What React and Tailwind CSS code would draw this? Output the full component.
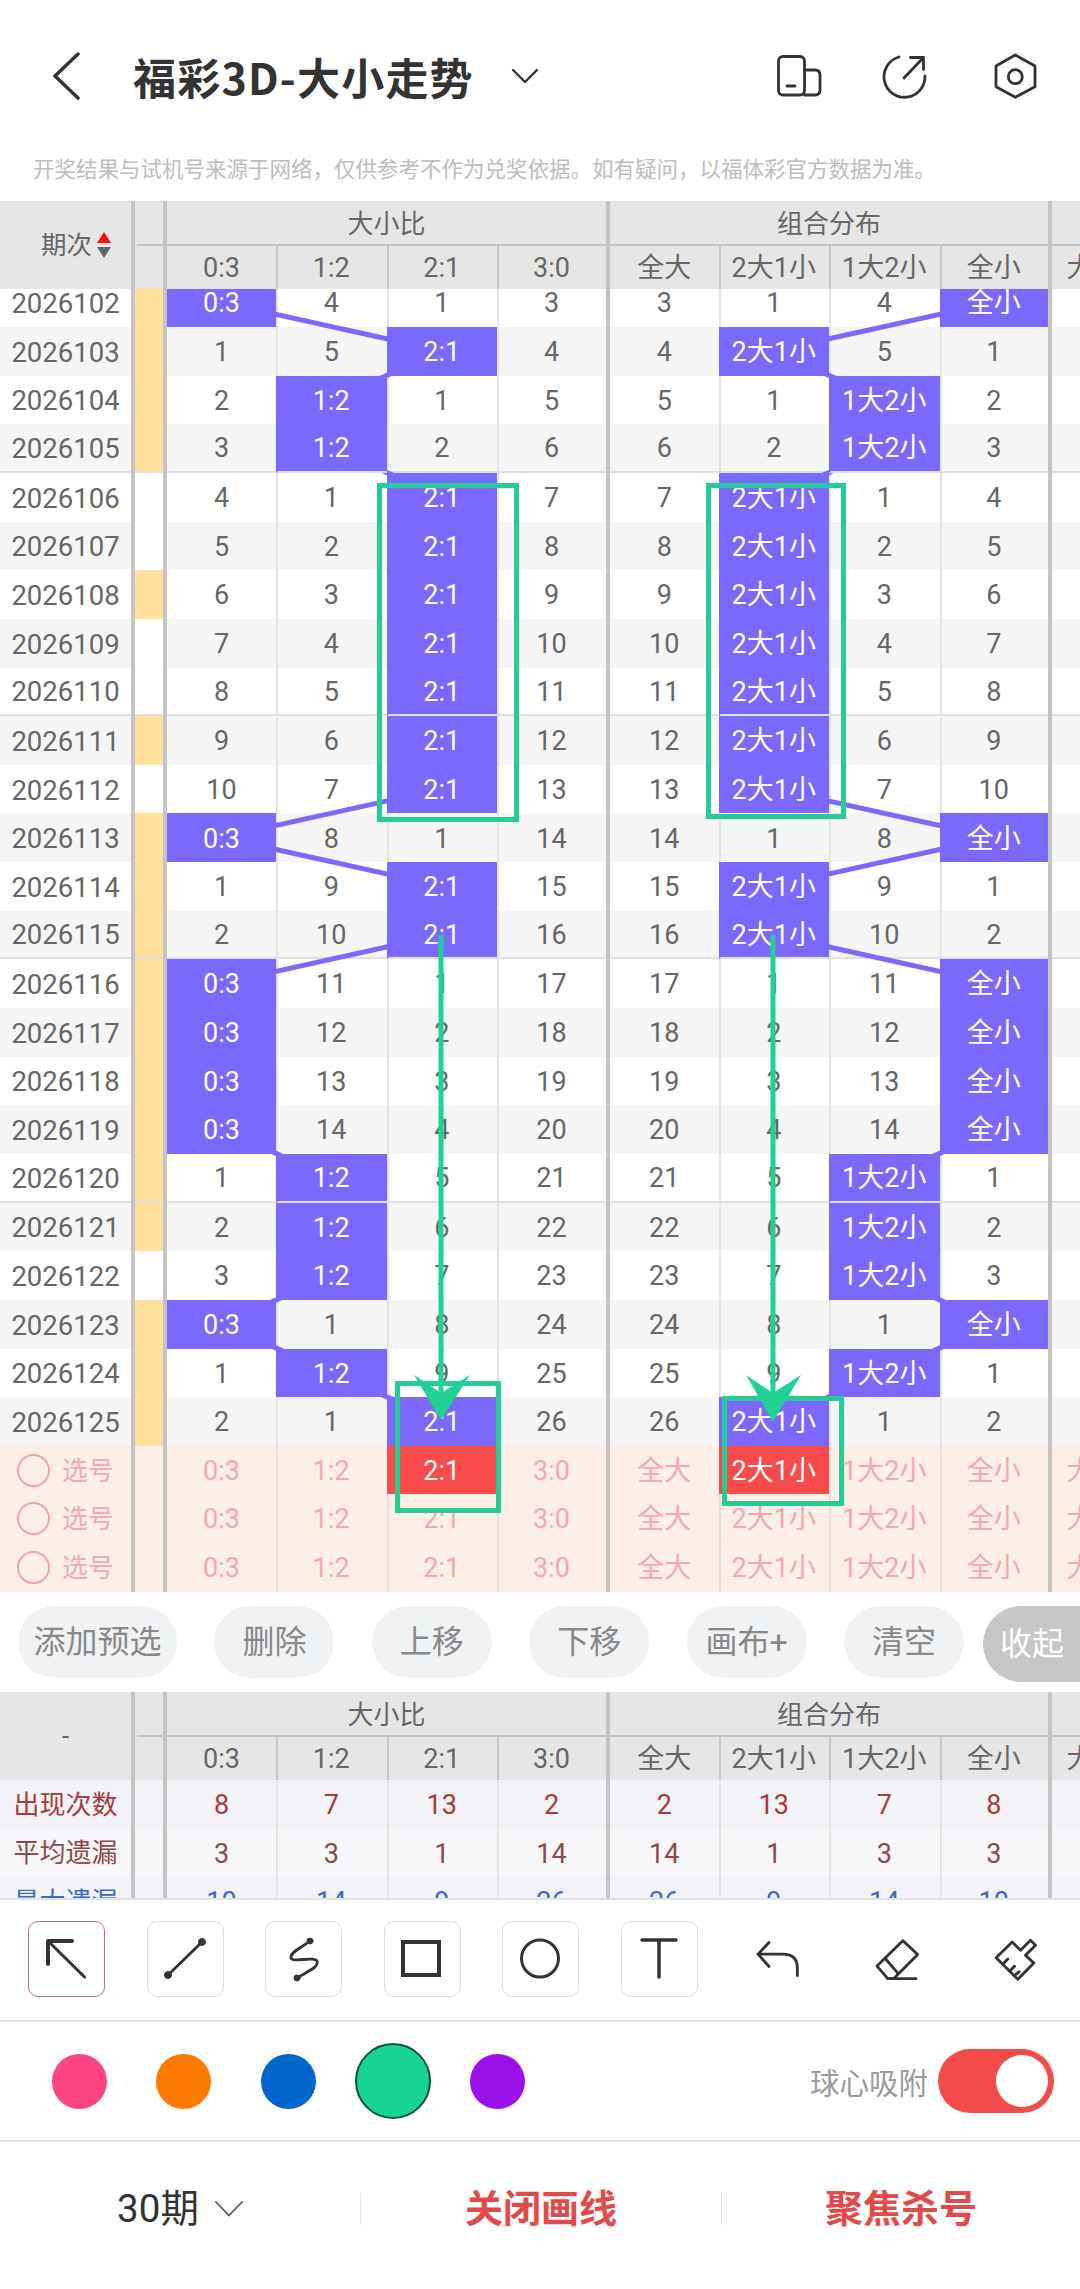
import React from "react";

const A_LABELS = ["0:3", "1:2", "2:1", "3:0"];
const B_LABELS = ["全大", "2大1小", "1大2小", "全小"];
const A_COLS = ["w-[109px]", "w-[110.5px] border-l-2 pr-[2px]", "w-[110.5px] border-l-2 pr-[2px]", "w-[109px] border-l-2 pr-[2px]"];
const B_COLS = ["w-[108.5px]", "w-[110.5px] border-l-2 pr-[2px]", "w-[110.5px] border-l-2 pr-[2px]", "w-[108.5px] border-l-2 pr-[2px]"];
const CENTERS_A = [221.5, 332, 442, 552];
const CENTERS_B = [664, 773.5, 884, 994];
const ROW_H = 48.65;

// 0 = hit
const ROWS = [
  [2026102, [0, 4, 1, 3]], [2026103, [1, 5, 0, 4]], [2026104, [2, 0, 1, 5]], [2026105, [3, 0, 2, 6]],
  [2026106, [4, 1, 0, 7]], [2026107, [5, 2, 0, 8]], [2026108, [6, 3, 0, 9]], [2026109, [7, 4, 0, 10]],
  [2026110, [8, 5, 0, 11]], [2026111, [9, 6, 0, 12]], [2026112, [10, 7, 0, 13]], [2026113, [0, 8, 1, 14]],
  [2026114, [1, 9, 0, 15]], [2026115, [2, 10, 0, 16]], [2026116, [0, 11, 1, 17]], [2026117, [0, 12, 2, 18]],
  [2026118, [0, 13, 3, 19]], [2026119, [0, 14, 4, 20]], [2026120, [1, 0, 5, 21]], [2026121, [2, 0, 6, 22]],
  [2026122, [3, 0, 7, 23]], [2026123, [0, 1, 8, 24]], [2026124, [1, 0, 9, 25]], [2026125, [2, 1, 0, 26]],
];
const YELLOW = new Set([2026102, 2026103, 2026104, 2026105, 2026108, 2026111, 2026113, 2026114, 2026115, 2026116, 2026117, 2026118, 2026119, 2026120, 2026121, 2026123, 2026124, 2026125]);
const GROUP_END = new Set([2026105, 2026110, 2026115, 2026120]);

const Bar = () => <div className="w-[4px] shrink-0 self-stretch bg-[#c4c4c4]" />;

function Cell({ cls, hit, end, children, red, pink }) {
  return (
    <div
      className={
        "relative flex shrink-0 items-center justify-center pt-[2px] " + cls + " " +
        (end ? "border-b-2 border-b-[#e0e0e0] " : "") +
        (hit ? "z-[2] border-l-[#7b68fc] bg-[#7b68fc] text-white " : red ? "z-[2] border-l-[#f94b4b] bg-[#f94b4b] text-white " : pink ? "border-l-[#e6e0de] text-[#f2a9a9] " : "border-l-[#e4e4e4] text-[#666666] ")
      }
    >
      {children}
    </div>
  );
}

function GroupHeader({ nameCell }) {
  return (
    <div className="flex h-[88px] w-[1200px] bg-[#e6e6e6] text-[27px] text-[#666666]">
      <div className="flex w-[131px] shrink-0 items-center">{nameCell}</div>
      <Bar />
      <div className="flex flex-col">
        <div className="ml-[2px] flex h-[45px] border-b-2 border-[#c4c4c4]">
          <div className="w-[26px] shrink-0" />
          <Bar />
          <div className="flex w-[439px] shrink-0 items-center justify-center pt-[4px] text-[26px]">大小比</div>
          <Bar />
          <div className="flex w-[438px] shrink-0 items-center justify-center pt-[4px] text-[26px]">组合分布</div>
          <Bar />
        </div>
        <div className="flex h-[43px]">
          <div className="w-[28px] shrink-0" />
          <Bar />
          {A_LABELS.map((l, i) => (
            <div key={l} className={"flex shrink-0 items-center justify-center border-l-[#c8c8c8] pt-[2px] " + A_COLS[i]}>{l}</div>
          ))}
          <Bar />
          {B_LABELS.map((l, i) => (
            <div key={l} className={"flex shrink-0 items-center justify-center border-l-[#c8c8c8] pt-[2px] " + B_COLS[i]}>{l}</div>
          ))}
          <Bar />
          <div className="flex w-[110px] shrink-0 items-center justify-center pt-[2px]">大大大</div>
        </div>
      </div>
    </div>
  );
}

function DataRow({ id, vals, i }) {
  const end = GROUP_END.has(id);
  const bg = i % 2 === 0 ? "bg-white" : "bg-[#f5f5f5]";
  const endCls = end ? "border-b-2 border-b-[#e0e0e0] " : "";
  const b = [...vals].reverse();
  return (
    <div className={"flex h-[48.65px] w-[1200px] text-[27px] " + bg}>
      <div className={"flex w-[131px] shrink-0 items-center justify-center pt-[2px] text-[27.5px] text-[#666666] " + endCls}>{id}</div>
      <Bar />
      <div className={"w-[28px] shrink-0 " + endCls + (YELLOW.has(id) ? "bg-[#fde09b]" : "bg-white")} />
      <Bar />
      {vals.map((v, c) => (
        <Cell key={c} cls={A_COLS[c]} hit={v === 0} end={end}>{v === 0 ? A_LABELS[c] : v}</Cell>
      ))}
      <Bar />
      {b.map((v, c) => (
        <Cell key={c} cls={B_COLS[c]} hit={v === 0} end={end}>{v === 0 ? B_LABELS[c] : v}</Cell>
      ))}
      <Bar />
      <div className={"w-[110px] shrink-0 " + endCls} />
    </div>
  );
}

function PickRow({ redA, redB }) {
  return (
    <div className="flex h-[48.65px] w-[1200px] bg-[#fdeee8] text-[27px] text-[#f2a9a9]">
      <div className="flex w-[131px] shrink-0 items-center pl-[17px] text-[26px]">
        <div className="h-[33px] w-[33px] rounded-full border-2 border-[#f0a5a5]" />
        <span className="ml-[12px] pt-[2px]">选号</span>
      </div>
      <Bar />
      <div className="w-[28px] shrink-0" />
      <Bar />
      {A_LABELS.map((l, c) => (
        <Cell key={c} cls={A_COLS[c]} pink red={c === redA}>{l}</Cell>
      ))}
      <Bar />
      {B_LABELS.map((l, c) => (
        <Cell key={c} cls={B_COLS[c]} pink red={c === redB}>{l}</Cell>
      ))}
      <Bar />
      <div className="flex w-[110px] shrink-0 items-center justify-center pt-[2px]">大大大</div>
    </div>
  );
}

function StatRow({ name, vals, bg, color }) {
  const b = [...vals].reverse();
  return (
    <div className={"flex h-[48.65px] w-[1200px] shrink-0 text-[27px] " + bg + " " + color}>
      <div className="flex w-[131px] shrink-0 items-center justify-center pt-[2px] text-[26px]">{name}</div>
      <Bar />
      <div className="w-[28px] shrink-0" />
      <Bar />
      {vals.map((v, c) => (
        <div key={c} className={"flex shrink-0 items-center justify-center border-l-[#e4e4e4] pt-[2px] " + A_COLS[c]}>{v}</div>
      ))}
      <Bar />
      {b.map((v, c) => (
        <div key={c} className={"flex shrink-0 items-center justify-center border-l-[#e4e4e4] pt-[2px] " + B_COLS[c]}>{v}</div>
      ))}
      <Bar />
    </div>
  );
}

function ConnectLines() {
  const colA = [1, ...ROWS.map(([, v]) => v.indexOf(0))];
  const ys = colA.map((_, i) => (i - 1) * ROW_H + ROW_H / 2);
  const lines = [];
  for (let i = 1; i < colA.length; i++) {
    lines.push([CENTERS_A[colA[i - 1]], ys[i - 1], CENTERS_A[colA[i]], ys[i]]);
    lines.push([CENTERS_B[3 - colA[i - 1]], ys[i - 1], CENTERS_B[3 - colA[i]], ys[i]]);
  }
  return (
    <svg className="absolute left-0 top-0 z-[1] overflow-visible" width="1080" height="1314">
      {lines.map((l, i) => (
        <line key={i} x1={l[0]} y1={l[1]} x2={l[2]} y2={l[3]} stroke="#7b68fc" strokeWidth="5" />
      ))}
    </svg>
  );
}

function Annotations() {
  const g = "#1fd192";
  return (
    <svg className="pointer-events-none absolute left-0 top-0 z-10" width="1080" height="2289">
      <g fill="none" stroke="#26cc95" strokeWidth="5">
        <rect x="379.5" y="485.5" width="137" height="334" />
        <rect x="708.5" y="485.5" width="135" height="331" />
        <rect x="397.5" y="1383.5" width="101" height="127" />
        <rect x="724.5" y="1398.5" width="117" height="105" />
      </g>
      <g stroke={g} strokeWidth="5">
        <line x1="441" y1="935" x2="441" y2="1400" />
        <line x1="773" y1="935" x2="773" y2="1400" />
      </g>
      <polygon fill={g} points="414,1375 441,1393 470,1375 441,1420" />
      <polygon fill={g} points="746,1375 773,1393 801,1375 773,1422" />
    </svg>
  );
}

const Tool = ({ active, children }) => (
  <div className={"h-[76px] w-[77px] shrink-0 rounded-[10px] border-[1.5px] " + (active ? "border-[#c87070]" : "border-[#dcdcdc]")}>
    {children}
  </div>
);
const Plain = ({ children }) => (
  <div className="flex h-[76px] w-[77px] shrink-0 items-center justify-center">{children}</div>
);

const Pill = ({ cls, children }) => (
  <div className={"flex h-[72px] shrink-0 items-center justify-center rounded-full bg-[#f1f2f4] text-[32px] text-[#888888] " + cls}>{children}</div>
);

const Dot = ({ cls }) => (
  <div className="flex w-[104.5px] shrink-0 items-center justify-center"><div className={"rounded-full " + cls} /></div>
);

export default function App() {
  const s = "#333333";
  return (
    <div className="relative h-[2289px] w-[1080px] overflow-hidden bg-white font-['Roboto','Noto_Sans_CJK_SC',sans-serif]">
      {/* top bar */}
      <div className="flex h-[152px] items-center pl-[52px]">
        <svg width="30" height="48" viewBox="52 51 30 48" fill="none" stroke={s} strokeWidth="3.5" strokeLinecap="round" strokeLinejoin="round">
          <path d="M78 53 L55 75 L78 97" />
        </svg>
        <div className="ml-[51px] font-['Noto_Sans_CJK_SC',sans-serif] text-[43px] font-bold tracking-[1.2px] text-[#333333]">福彩3D-大小走势</div>
        <svg className="ml-[37px]" width="28" height="16" viewBox="511 67 28 16" fill="none" stroke={s} strokeWidth="2.4" strokeLinecap="round" strokeLinejoin="round">
          <path d="M513 69 L525 81 L537 69" />
        </svg>
        <svg className="ml-[237px]" width="46" height="44" viewBox="775 55 46 44" fill="none" stroke={s} strokeWidth="2.8" strokeLinecap="round" strokeLinejoin="round">
          <rect x="777.5" y="57.5" width="26" height="38.5" rx="4.5" />
          <path d="M803.5 71 H814 Q819 71 819 76 V91 Q819 96 814 96 H803.5" />
          <path d="M786 87 H794" />
        </svg>
        <svg className="ml-[60px]" width="46" height="46" viewBox="881 55 46 46" fill="none" stroke={s} strokeWidth="2.8" strokeLinecap="round" strokeLinejoin="round">
          <path d="M898 59 A20.5 20.5 0 1 0 924 78" />
          <path d="M903 80 L922.5 59.5 M909.5 59.5 H922.5 V71.5" />
        </svg>
        <svg className="ml-[66px]" width="44" height="46" viewBox="994 53 44 46" fill="none" stroke={s} strokeWidth="2.8" strokeLinecap="round" strokeLinejoin="round">
          <path d="M1015.3 55 L1035 66 V86.7 L1015.3 97.3 L996 86.7 V66 Z" />
          <circle cx="1015.3" cy="76.7" r="7" />
        </svg>
      </div>
      <div className="h-[49px] pl-[33px] font-['Noto_Sans_CJK_SC',sans-serif] text-[21.5px] leading-[32px] text-[#bcbcbc]">开奖结果与试机号来源于网络，仅供参考不作为兑奖依据。如有疑问，以福体彩官方数据为准。</div>

      {/* main table */}
      <GroupHeader
        nameCell={
          <div className="flex items-center pl-[41px] text-[25.5px]">
            <span>期次</span>
            <svg className="ml-[5px]" width="14" height="26" viewBox="0 0 14 26">
              <polygon points="7,0 14,11 0,11" fill="#ee1111" />
              <polygon points="0,15 14,15 7,26" fill="#666666" />
            </svg>
          </div>
        }
      />
      <div className="h-[1303px] max-h-[1303px] overflow-hidden">
        <div className="relative -mt-[10.6px]">
          <ConnectLines />
          {ROWS.map(([id, vals], i) => (
            <DataRow key={id} id={id} vals={vals} i={i} />
          ))}
          <PickRow redA={2} redB={1} />
          <PickRow />
          <PickRow />
        </div>
      </div>

      {/* actions */}
      <div className="flex h-[100px] gap-[37.4px] overflow-hidden pl-[18px] pt-[14px]">
        <Pill cls="w-[159px]">添加预选</Pill>
        <Pill cls="w-[120px]">删除</Pill>
        <Pill cls="w-[120px]">上移</Pill>
        <Pill cls="w-[120px]">下移</Pill>
        <Pill cls="w-[120px]">画布+</Pill>
        <Pill cls="w-[120px]">清空</Pill>
      </div>
      <div className="absolute left-[983px] top-[1606px] z-[3] flex h-[76px] w-[110px] items-center rounded-l-[38px] bg-[#c6c6c6] pl-[17px] text-[32px] text-white">收起</div>

      {/* stats */}
      <div className="h-[206px] overflow-hidden">
        <GroupHeader nameCell={<div className="w-full text-center text-[26px]">-</div>} />
        <StatRow name="出现次数" vals={[8, 7, 13, 2]} bg="bg-[#f3f2f7]" color="text-[#a83a3a]" />
        <StatRow name="平均遗漏" vals={[3, 3, 1, 14]} bg="bg-[#f7f6f9]" color="text-[#8e4a4a]" />
        <StatRow name="最大遗漏" vals={[10, 14, 9, 26]} bg="bg-[#f2f2f8]" color="text-[#3a6bc4]" />
      </div>

      {/* tools */}
      <div className="flex h-[124px] gap-[41.6px] border-y-2 border-[#e2e2e2] pl-[28px] pt-[21px]">
        <Tool active>
          <svg width="74" height="73" viewBox="0 0 74 73" fill="none" stroke={s} strokeLinecap="round" strokeLinejoin="round">
            <path d="M19 19 H43 M19 19 V42" strokeWidth="4" />
            <path d="M19 19 L55.5 55" strokeWidth="3" />
          </svg>
        </Tool>
        <Tool>
          <svg width="74" height="73" viewBox="0 0 74 73" fill={s} stroke={s} strokeLinecap="round">
            <path d="M20 53 L54 20" strokeWidth="2.8" />
            <circle cx="20" cy="53" r="3.5" />
            <circle cx="54" cy="20" r="3.5" />
          </svg>
        </Tool>
        <Tool>
          <svg width="74" height="73" viewBox="0 0 74 73" fill="none" stroke={s} strokeLinecap="round">
            <path d="M44 19 C35 26 24 30 25 36 C26 41 48 34 51 39 C53 46 40 50 31 56" strokeWidth="2.8" />
            <circle cx="44" cy="19" r="3" fill={s} />
            <circle cx="31" cy="56" r="3" fill={s} />
          </svg>
        </Tool>
        <Tool>
          <svg width="74" height="73" viewBox="0 0 74 73" fill="none" stroke={s} strokeWidth="4">
            <rect x="18" y="20" width="36" height="33" />
          </svg>
        </Tool>
        <Tool>
          <svg width="74" height="73" viewBox="0 0 74 73" fill="none" stroke={s} strokeWidth="3">
            <circle cx="37" cy="36.5" r="18.5" />
          </svg>
        </Tool>
        <Tool>
          <svg width="74" height="73" viewBox="0 0 74 73" fill="none" stroke={s} strokeWidth="3.5" strokeLinecap="round">
            <path d="M20 18 H54 M37 18 V55" />
          </svg>
        </Tool>
        <Plain>
          <svg width="50" height="42" viewBox="70 85 150 125" fill="none" stroke={s} strokeWidth="8.5" strokeLinecap="round" strokeLinejoin="round">
            <path d="M118 98 L85 133 L118 170 M85 133 H160 Q203 133 203 175 V197" />
          </svg>
        </Plain>
        <Plain>
          <svg width="48" height="47" viewBox="425 75 145 140" fill="none" stroke={s} strokeWidth="8.5" strokeLinecap="round" strokeLinejoin="round">
            <path d="M515 88 L560 130 L487 203 H470 L437 165 Z" />
            <path d="M462 142 L500 186 M470 203 H555" />
          </svg>
        </Plain>
        <Plain>
          <svg width="47" height="45" viewBox="785 80 140 135" fill="none" stroke={s} strokeWidth="8.5" strokeLinecap="round" strokeLinejoin="round">
            <path d="M845 95 L870 120 L900 90 L915 105 L885 135 L910 158 L862 207 L797 142 Z" />
            <path d="M817 162 L832 146 M838 182 L852 168 M852 196 L866 184" />
          </svg>
        </Plain>
      </div>

      {/* colours */}
      <div className="flex h-[120px] items-center border-b-2 border-[#e2e2e2] pl-[26.75px]">
        <Dot cls="h-[55px] w-[55px] bg-[#fd4485]" />
        <Dot cls="h-[55px] w-[55px] bg-[#ff7a00]" />
        <Dot cls="h-[55px] w-[55px] bg-[#0066cc]" />
        <Dot cls="h-[76px] w-[76px] border-2 border-[#14503c] bg-[#18d494]" />
        <Dot cls="h-[55px] w-[55px] bg-[#9a10e8]" />
        <div className="ml-auto flex items-center pr-[26px]">
          <span className="font-['Noto_Sans_CJK_SC',sans-serif] text-[29.5px] text-[#9a9a9a]">球心吸附</span>
          <div className="ml-[10px] flex h-[64px] w-[116px] items-center justify-end rounded-full bg-[#f54a4a] pr-[6px]">
            <div className="h-[52px] w-[52px] rounded-full bg-white" />
          </div>
        </div>
      </div>

      {/* bottom */}
      <div className="flex h-[134px] items-center">
        <div className="flex w-[360px] items-center justify-center text-[38.5px] text-[#333333]">
          <span>30期</span>
          <svg className="ml-[16px]" width="28" height="16" viewBox="0 0 28 16" fill="none" stroke="#555555" strokeWidth="1.8" strokeLinecap="round" strokeLinejoin="round">
            <path d="M1 1 L14 14.5 L27 1" />
          </svg>
        </div>
        <div className="h-[32px] w-px bg-[#e5e5e5]" />
        <div className="w-[360px] text-center text-[38px] font-bold text-[#e24a4a]">关闭画线</div>
        <div className="h-[32px] w-px bg-[#e5e5e5]" />
        <div className="flex-1 text-center text-[38px] font-bold text-[#e24a4a]">聚焦杀号</div>
      </div>

      <Annotations />
    </div>
  );
}
